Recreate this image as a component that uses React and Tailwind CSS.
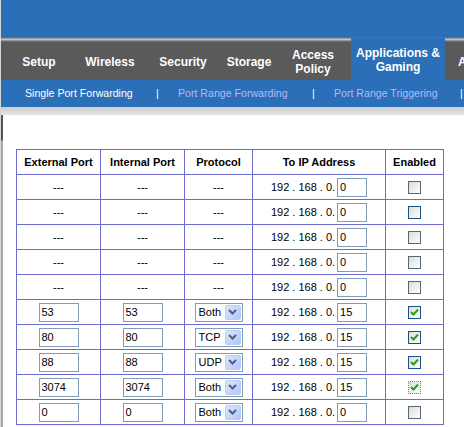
import React from "react";

const font = { fontFamily: '"Liberation Sans", Arial, sans-serif' };

const tabs = [
  { w: "w-[76px]", label: ["Setup"] },
  { w: "w-[66px]", label: ["Wireless"] },
  { w: "w-[80px]", label: ["Security"] },
  { w: "w-[52px]", label: ["Storage"] },
  { w: "w-[76px]", label: ["Access", "Policy"] },
];

const rows = [
  { ext: null, int: null, proto: null, ip: "0", checked: false, border: "gray" },
  { ext: null, int: null, proto: null, ip: "0", checked: false, border: "blue" },
  { ext: null, int: null, proto: null, ip: "0", checked: false, border: "gray" },
  { ext: null, int: null, proto: null, ip: "0", checked: false, border: "gray" },
  { ext: null, int: null, proto: null, ip: "0", checked: false, border: "gray" },
  { ext: "53", int: "53", proto: "Both", ip: "15", checked: true, border: "blue" },
  { ext: "80", int: "80", proto: "TCP", ip: "15", checked: true, border: "blue" },
  { ext: "88", int: "88", proto: "UDP", ip: "15", checked: true, border: "blue" },
  { ext: "3074", int: "3074", proto: "Both", ip: "15", checked: true, border: "focus" },
  { ext: "0", int: "0", proto: "Both", ip: "0", checked: false, border: "gray" },
];

function TextBox({ value, w = "w-[40px]" }) {
  return (
    <div
      className={`${w} h-[19px] border border-[#7f9db9] bg-white text-[11px] leading-[17px] pl-[2px] text-black`}
    >
      {value}
    </div>
  );
}

function Select({ value }) {
  return (
    <div className="w-[48px] h-[19px] border border-[#7f9db9] bg-white flex items-center justify-between pl-[3px] pr-[1px] text-[11px] text-black">
      <span>{value}</span>
      <div className="w-[16px] h-[15px] rounded-[2px] border border-[#b9cdf5] bg-[linear-gradient(135deg,#dce6fd,#b1c6f6)] flex items-center justify-center">
        <svg width="9" height="6" viewBox="0 0 9 6">
          <path d="M1 1 L4.5 4.5 L8 1" fill="none" stroke="#4d6185" strokeWidth="2" />
        </svg>
      </div>
    </div>
  );
}

function Check({ checked, border }) {
  const b =
    border === "focus"
      ? "border border-dotted border-[#b4773a]"
      : border === "blue"
      ? "border border-[#1c5180]"
      : "border border-[#56677a]";
  return (
    <div
      className={`w-[13px] h-[13px] ${b} bg-[linear-gradient(135deg,#dcdcd6,#ffffff)] flex items-center justify-center`}
    >
      {checked && (
        <svg width="11" height="11" viewBox="0 0 11 11">
          <path d="M2 5 L4.5 7.5 L9 2.5" fill="none" stroke="#21a121" strokeWidth="2" />
        </svg>
      )}
    </div>
  );
}

function Cell({ children }) {
  return (
    <div className="h-[25px] border-b border-r border-[#6b6bcf] flex items-center justify-center text-[11px] text-black">
      {children}
    </div>
  );
}

export default function App() {
  return (
    <div className="w-[464px] h-[427px] overflow-hidden bg-white flex" style={font}>
      <div className="w-[1px] bg-[#d6d6d6] shrink-0" />
      <div className="w-[463px] flex flex-col">
        <div className="h-[37px] bg-[#2a6fb7] shrink-0" />
        <div className="h-[43px] flex bg-[#5a5a5a] shrink-0">
          {tabs.map((t, i) => (
            <div key={i} className={`${t.w} flex flex-col shrink-0`}>
              <div className="h-[5px] bg-[linear-gradient(#6a6a6a_0px,#6a6a6a_1px,#d6d6de_2px,#a4a4ac_3px,#5a5a5a_5px)]" />
              <div className="flex-1 flex flex-col items-center justify-center text-white font-bold text-[12px] leading-[14px] pt-[1px]">
                {t.label.map((l) => (
                  <span key={l}>{l}</span>
                ))}
              </div>
            </div>
          ))}
          <div className="w-[94px] shrink-0 flex flex-col bg-[#2a6fb7]">
            <div className="h-[1px] bg-[#3a77b8]" />
            <div className="flex-1 flex flex-col items-center justify-center text-white font-bold text-[12px] leading-[14px] pt-[2px]">
              <span>Applications &amp;</span>
              <span>Gaming</span>
            </div>
          </div>
          <div className="flex-1 flex flex-col">
            <div className="h-[5px] bg-[linear-gradient(#6a6a6a_0px,#6a6a6a_1px,#d6d6de_2px,#a4a4ac_3px,#5a5a5a_5px)]" />
            <div className="flex-1 flex items-center pl-[13px] text-white font-bold text-[12px] pt-[1px]">
              A
            </div>
          </div>
        </div>
        <div className="h-[27px] bg-[#2a6fb7] flex items-center text-[10.6px] shrink-0 pt-[1px]">
          <span className="w-[155px] pl-[24px] text-white shrink-0 whitespace-nowrap">Single Port Forwarding</span>
          <span className="w-[22px] text-white shrink-0">|</span>
          <span className="w-[134px] text-[#b8b8f2] shrink-0 whitespace-nowrap">Port Range Forwarding</span>
          <span className="w-[22px] text-white shrink-0">|</span>
          <span className="w-[126px] text-[#b8b8f2] shrink-0 whitespace-nowrap">Port Range Triggering</span>
          <span className="text-white shrink-0">|</span>
        </div>
        <div className="h-[8px] bg-[linear-gradient(#cdcdcd,#e4e4e4)] shrink-0" />
        <div className="flex-1 flex">
          <div className="w-[2px] shrink-0 bg-[linear-gradient(#555555_0px,#555555_25px,#a8a8a8_26px,#a8a8a8)]" />
          <div className="pl-[13px] pt-[34px]">
            <div className="grid grid-cols-[84px_84px_68px_133px_58px] border-l border-t border-[#6b6bcf]">
              {["External Port", "Internal Port", "Protocol", "To IP Address", "Enabled"].map((h) => (
                <Cell key={h}>
                  <span className="font-bold">{h}</span>
                </Cell>
              ))}
              {rows.map((r, i) => (
                <React.Fragment key={i}>
                  <Cell>{r.ext === null ? "---" : <TextBox value={r.ext} />}</Cell>
                  <Cell>{r.int === null ? "---" : <TextBox value={r.int} />}</Cell>
                  <Cell>{r.proto === null ? "---" : <Select value={r.proto} />}</Cell>
                  <Cell>
                    <span className="mr-[2px] whitespace-nowrap">192 . 168 . 0.</span>
                    <TextBox value={r.ip} w="w-[30px]" />
                  </Cell>
                  <Cell>
                    <Check checked={r.checked} border={r.border} />
                  </Cell>
                </React.Fragment>
              ))}
            </div>
          </div>
        </div>
      </div>
    </div>
  );
}
